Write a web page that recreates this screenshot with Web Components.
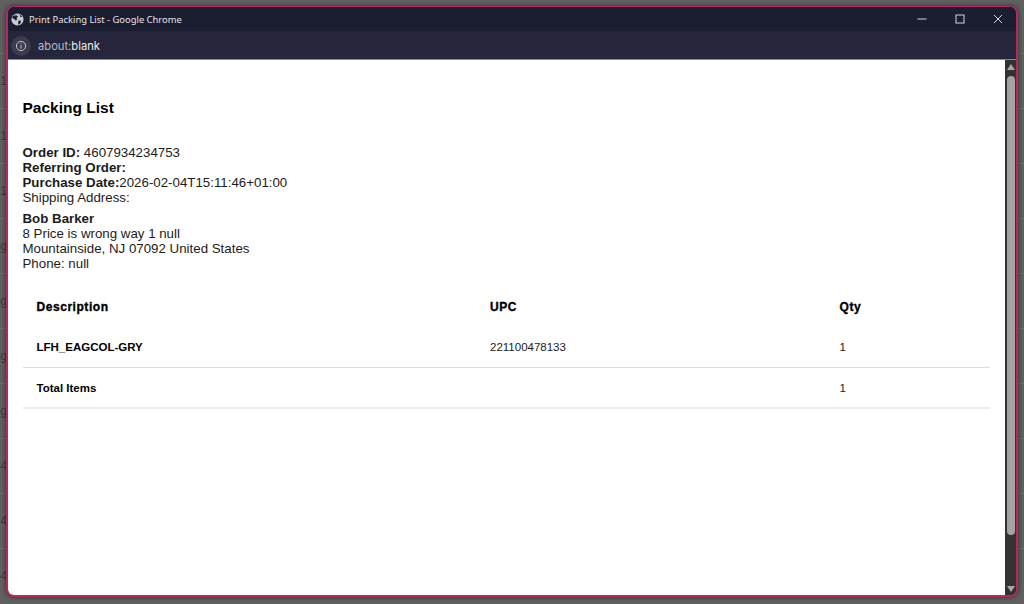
<!DOCTYPE html>
<html>
<head>
<meta charset="utf-8">
<title>Print Packing List</title>
<style>
  html, body { margin: 0; height: 100%; }
  body { background: #606060; overflow: hidden; font-family: "Liberation Sans", Arial, sans-serif; padding-top: 6px; box-sizing: border-box; }
</style>
</head>
<body>
<desk-backdrop></desk-backdrop>
<chrome-window window-title="Print Packing List - Google Chrome" url="about:blank">
  <packing-list>
    <order-summary>
      <div><b>Order ID:</b> 4607934234753</div>
      <div><b>Referring Order:</b></div>
      <div><b>Purchase Date:</b>2026-02-04T15:11:46+01:00</div>
      <div>Shipping Address:</div>
      <address-block>
        <b>Bob Barker</b>
        <div>8 Price is wrong way 1 null</div>
        <div>Mountainside, NJ 07092 United States</div>
        <div>Phone: null</div>
      </address-block>
    </order-summary>
    <items-table></items-table>
  </packing-list>
</chrome-window>

<script>
// dimmed page behind the popup, only its left edge shows
class DeskBackdrop extends HTMLElement {
  constructor() {
    super();
    const labels = ['1', '1', '1', 'g', 'g', 'g', 'g', '4', '4', '4'];
    const rows = labels.map(t => `<div class="row"><span>${t}</span></div>`).join('');
    const shadow = this.attachShadow({mode: 'open'});
    shadow.innerHTML = `
      <style>
        :host {
          display: block;
          position: absolute;
          top: 53px;
          left: 0;
          right: 0;
          font: 12px "Liberation Sans", Arial, sans-serif;
          color: #3c3c3c;
        }
        .row {
          display: flex;
          align-items: center;
          box-sizing: border-box;
          height: 55px;
          border-top: 1px solid #6c6c6c;
        }
        .row span { width: 7px; text-align: right; }
      </style>
      ${rows}
    `;
  }
}

class ChromeWindow extends HTMLElement {
  constructor() {
    super();
    const title = this.getAttribute('window-title');
    const url = this.getAttribute('url');
    const shadow = this.attachShadow({mode: 'open'});
    shadow.innerHTML = `
      <style>
        :host {
          display: flex;
          flex-direction: column;
          position: relative;
          box-sizing: border-box;
          height: 591px;
          margin: 0 6px 0 6px;
          border: 2px solid #b32a63;
          border-top-width: 1px;
          border-radius: 8px;
          overflow: hidden;
          background: #1b1d30;
          box-shadow: 0 0 5px rgba(0,0,0,.55);
        }
        .titlebar {
          display: flex;
          align-items: center;
          height: 24px;
          flex: none;
          padding-left: 3px;
          background: #1b1d30;
          color: #e4e4e8;
          font: 9.4px "Noto Sans", "Liberation Sans", sans-serif;
        }
        .titlebar svg.globe { margin-right: 5px; }
        .title { flex: 1; }
        .controls { display: flex; margin-right: -1px; }
        .controls button {
          display: flex;
          align-items: center;
          justify-content: center;
          width: 38px;
          height: 24px;
          padding: 0;
          border: 0;
          background: none;
        }
        .urlbar {
          display: flex;
          align-items: center;
          box-sizing: border-box;
          height: 28px;
          flex: none;
          padding: 2px 0 0 3px;
          background: #25263b;
          color: #b9bac6;
          font: 11.2px "Inter", "Liberation Sans", sans-serif;
        }
        .info {
          display: flex;
          align-items: center;
          justify-content: center;
          width: 20px;
          height: 20px;
          margin-right: 7px;
          border-radius: 50%;
          background: #3a3b4e;
        }
        .urlbar b { font-weight: 400; color: #eceded; }
        .body { flex: 1; display: flex; min-height: 0; border-top: 1px solid #8a8a92; }
        .page { flex: 1; background: #fff; min-width: 0; overflow: hidden; }
        .scrollbar {
          width: 11px;
          flex: none;
          display: flex;
          flex-direction: column;
          align-items: center;
          background: #323232;
        }
        .arrow { width: 0; height: 0; border-left: 4px solid transparent; border-right: 4px solid transparent; }
        .up { margin-top: 4px; border-bottom: 6px solid #a6a6a6; }
        .down { margin-top: auto; margin-bottom: 3px; border-top: 6px solid #a6a6a6; }
        .thumb { height: 459px; width: 8px; margin-top: 6px; border-radius: 4px; background: #a3a3a3; }
      </style>
      <div class="titlebar">
        <svg class="globe" width="13" height="13" viewBox="0 0 12 12">
          <circle cx="6" cy="6" r="5.6" fill="#c9c9d0"/>
          <path d="M2 2.6 L5 2 L6.5 3.2 L5.2 4.6 L5.8 6 L4.4 7 L2.6 5.4 L1 4.6 Z M7 7 L9.4 7.2 L8.6 9.6 L6.8 10.8 L6.6 8.6 Z M8 1.4 L10.4 3.4 L8.6 3.6 Z" fill="#1b1d30"/>
        </svg>
        <span class="title">${title}</span>
        <div class="controls">
          <button><svg width="10" height="10" viewBox="0 0 10 10"><path d="M0.5 5 H9.5" stroke="#d8d8dc" stroke-width="1"/></svg></button>
          <button><svg width="10" height="10" viewBox="0 0 10 10"><rect x="1" y="1" width="8" height="8" fill="none" stroke="#d8d8dc" stroke-width="1"/></svg></button>
          <button><svg width="10" height="10" viewBox="0 0 10 10"><path d="M1 1 L9 9 M9 1 L1 9" stroke="#d8d8dc" stroke-width="1"/></svg></button>
        </div>
      </div>
      <div class="urlbar">
        <span class="info">
          <svg width="12" height="12" viewBox="0 0 12 12">
            <circle cx="6" cy="6" r="4.6" fill="none" stroke="#c4c5cc" stroke-width="1"/>
            <path d="M6 5.2 V8.6 M6 3.4 V4.4" stroke="#c4c5cc" stroke-width="1"/>
          </svg>
        </span>
        <span>about:<b>blank</b></span>
      </div>
      <div class="body">
        <div class="page"><slot></slot></div>
        <div class="scrollbar">
          <div class="arrow up"></div>
          <div class="thumb"></div>
          <div class="arrow down"></div>
        </div>
      </div>
    `;
  }
}

class PackingList extends HTMLElement {
  constructor() {
    super();
    const shadow = this.attachShadow({mode: 'open'});
    shadow.innerHTML = `
      <style>
        :host {
          display: block;
          padding: 39px 15px 0 14.5px;
          color: #000;
          font-family: "Liberation Sans", Arial, sans-serif;
        }
        h2 { margin: 0 0 28px; font-size: 15.5px; line-height: 18px; font-weight: 700; }
      </style>
      <h2>Packing List</h2>
      <slot></slot>
    `;
  }
}

class OrderSummary extends HTMLElement {
  constructor() {
    super();
    const shadow = this.attachShadow({mode: 'open'});
    shadow.innerHTML = `
      <style>
        :host {
          display: block;
          font-size: 13.3px;
          line-height: 15px;
          color: #1c1c1c;
        }
        ::slotted(b) { color: #000; }
      </style>
      <slot></slot>
    `;
  }
}

class AddressBlock extends HTMLElement {
  constructor() {
    super();
    const shadow = this.attachShadow({mode: 'open'});
    shadow.innerHTML = `
      <style>
        :host { display: block; margin-top: 6px; }
      </style>
      <slot></slot>
    `;
  }
}

class ItemsTable extends HTMLElement {
  constructor() {
    super();
    const shadow = this.attachShadow({mode: 'open'});
    shadow.innerHTML = `
      <style>
        :host {
          display: block;
          margin-top: 15px;
          font-size: 11.5px;
          color: #1c1c1c;
        }
        .row {
          display: grid;
          grid-template-columns: 453.5px 349.5px 1fr;
          align-items: center;
          padding-left: 14px;
          height: 40px;
        }
        .row > span { line-height: 14px; }
        .head { height: 41px; color: #000; font-size: 12px; letter-spacing: .55px; font-weight: 700; -webkit-text-stroke: 0.35px #000; }
        .rule { border-bottom: 1px solid #dedede; }
        .total { border-bottom-width: 2px; border-bottom-color: #ececec; height: 39px; }
        .strong { font-weight: 700; color: #000; }
      </style>
      <div class="row head"><span>Description</span><span>UPC</span><span>Qty</span></div>
      <div class="row rule"><span class="strong">LFH_EAGCOL-GRY</span><span>221100478133</span><span>1</span></div>
      <div class="row rule total"><span class="strong">Total Items</span><span></span><span>1</span></div>
    `;
  }
}

customElements.define('desk-backdrop', DeskBackdrop);
customElements.define('chrome-window', ChromeWindow);
customElements.define('packing-list', PackingList);
customElements.define('order-summary', OrderSummary);
customElements.define('address-block', AddressBlock);
customElements.define('items-table', ItemsTable);
</script>
</body>
</html>
